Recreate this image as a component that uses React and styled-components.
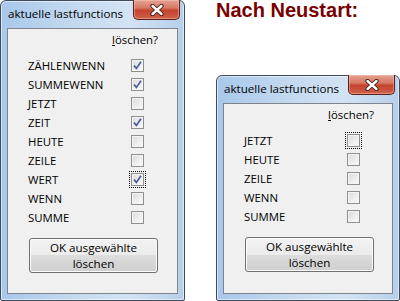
import React from "react";
import styled, { createGlobalStyle } from "styled-components";

const GlobalStyle = createGlobalStyle`
  html, body {
    margin: 0;
    padding: 0;
    background: #fff;
  }
`;

const Page = styled.div`
  width: 400px;
  height: 301px;
  overflow: hidden;
  display: flex;
  align-items: flex-start;
  background: #fff;
  font-family: "Open Sans", "Noto Sans", sans-serif;
  font-size: 11.4px;
  color: #000;
`;

const Side = styled.div`
  display: flex;
  flex-direction: column;
  margin-left: 31px;
`;

const Heading = styled.h2`
  margin: 0;
  height: 75px;
  font-family: "Liberation Sans", Arial, sans-serif;
  font-size: 20px;
  line-height: 20px;
  font-weight: bold;
  color: #7a0000;
`;

const Frame = styled.div`
  box-sizing: border-box;
  width: ${(p) => p.$w}px;
  height: ${(p) => p.$h}px;
  border: 1px solid #3d4b5c;
  border-radius: 6px 6px 2px 2px;
  background: linear-gradient(
    to right,
    #a8c8ea 0%,
    #c4d9ef 40%,
    #d3e3f4 70%,
    #b6cfea 100%
  );
  padding: 0 6px 6px 6px;
  display: flex;
  flex-direction: column;
  box-shadow: inset 0 0 0 1px rgba(255, 255, 255, 0.55);
`;

const TitleBar = styled.div`
  height: 27px;
  display: flex;
  justify-content: space-between;
  align-items: flex-start;
  flex-shrink: 0;
`;

const TitleText = styled.span`
  margin: 5px 0 0 1px;
  line-height: 16px;
  font-size: 11.6px;
  color: #000;
`;

const CloseButton = styled.div`
  box-sizing: border-box;
  width: 47px;
  height: 20px;
  margin-top: -1px;
  margin-right: -2px;
  border: 1px solid #5a2118;
  border-top: none;
  border-radius: 0 0 5px 5px;
  background: linear-gradient(
    to bottom,
    #e4a494 0%,
    #d77a66 40%,
    #c4432e 55%,
    #cf6249 100%
  );
  box-shadow: inset 0 0 0 1px rgba(255, 200, 190, 0.45);
  display: flex;
  align-items: center;
  justify-content: center;
`;

const Client = styled.div`
  flex: 1;
  background: #f0f0f0;
  border: 1px solid #7d848d;
  display: flex;
  flex-direction: column;
  padding: 0 0 0 20px;
`;

const Header = styled.div`
  height: 24px;
  padding-top: 3px;
  line-height: 16px;
  width: 130px;
  text-align: right;
  flex-shrink: 0;
`;

const Key = styled.span`
  text-decoration: underline;
`;

const Row = styled.div`
  height: 19px;
  display: flex;
  align-items: center;
`;

const Label = styled.span`
  width: 103px;
  line-height: 16px;
`;

const Box = styled.span`
  box-sizing: border-box;
  width: 13px;
  height: 13px;
  border: 1px solid #8e8f8f;
  background: linear-gradient(135deg, #dadada 0%, #f2f2f2 70%, #fbfbfb 100%);
  box-shadow: inset 0 0 0 1px #f4f4f4;
  display: flex;
  align-items: center;
  justify-content: center;
  outline: ${(p) => (p.$focus ? "1px dotted #000" : "none")};
  outline-offset: 1px;
`;

const OkButton = styled.div`
  box-sizing: border-box;
  margin-top: 11px;
  margin-left: 1px;
  width: 129px;
  height: 35px;
  border: 1px solid #707070;
  border-radius: 3px;
  background: linear-gradient(
    to bottom,
    #f2f2f2 0%,
    #ebebeb 50%,
    #dddddd 50%,
    #cfcfcf 100%
  );
  box-shadow: inset 0 0 0 1px #fcfcfc;
  display: flex;
  flex-direction: column;
  align-items: center;
  justify-content: center;
  font-size: 11.6px;
  line-height: 16px;
  text-align: center;
`;

function CloseX() {
  return (
    <svg width="14" height="12" viewBox="0 0 14 12">
      <path
        d="M2.5 2 L11.5 10 M11.5 2 L2.5 10"
        stroke="#3a1a14"
        strokeWidth="4.2"
        strokeLinecap="round"
      />
      <path
        d="M2.5 2 L11.5 10 M11.5 2 L2.5 10"
        stroke="#fff"
        strokeWidth="2.4"
        strokeLinecap="round"
      />
    </svg>
  );
}

function Check() {
  return (
    <svg width="9" height="9" viewBox="0 0 9 9">
      <path
        d="M1 4.6 L3.4 7.4 L8 0.8"
        fill="none"
        stroke="#4a5f99"
        strokeWidth="1.7"
      />
    </svg>
  );
}

function Dialog({ w, h, items }) {
  return (
    <Frame $w={w} $h={h}>
      <TitleBar>
        <TitleText>aktuelle lastfunctions</TitleText>
        <CloseButton>
          <CloseX />
        </CloseButton>
      </TitleBar>
      <Client>
        <Header>
          <Key>l</Key>öschen?
        </Header>
        {items.map((it) => (
          <Row key={it.name}>
            <Label>{it.name}</Label>
            <Box $focus={it.focus}>{it.checked && <Check />}</Box>
          </Row>
        ))}
        <OkButton>
          <span>OK ausgewählte</span>
          <span>löschen</span>
        </OkButton>
      </Client>
    </Frame>
  );
}

const before = [
  { name: "ZÄHLENWENN", checked: true },
  { name: "SUMMEWENN", checked: true },
  { name: "JETZT" },
  { name: "ZEIT", checked: true },
  { name: "HEUTE" },
  { name: "ZEILE" },
  { name: "WERT", checked: true, focus: true },
  { name: "WENN" },
  { name: "SUMME" },
];

const after = [
  { name: "JETZT", focus: true },
  { name: "HEUTE" },
  { name: "ZEILE" },
  { name: "WENN" },
  { name: "SUMME" },
];

export default function App() {
  return (
    <>
      <GlobalStyle />
      <Page>
        <Dialog w={185} h={301} items={before} />
        <Side>
          <Heading>Nach Neustart:</Heading>
          <Dialog w={184} h={226} items={after} />
        </Side>
      </Page>
    </>
  );
}
